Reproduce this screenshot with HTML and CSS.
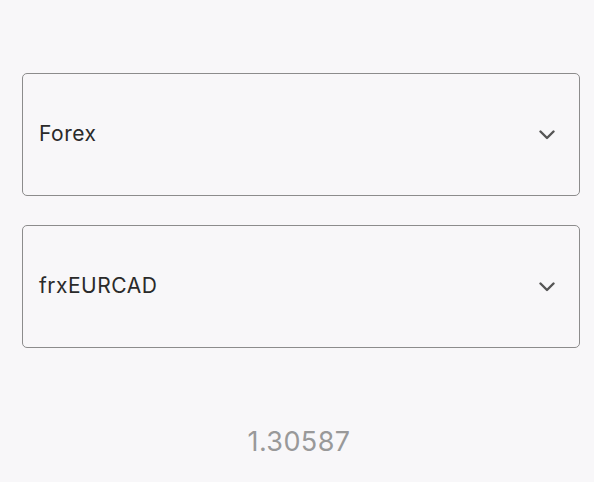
FILE: index.html
```html
<!DOCTYPE html>
<html>
<head>
<meta charset="utf-8">
<link rel="stylesheet" href="styles.css">
</head>
<body>
<main class="page">
  <div class="select">
    <span class="select-label">Forex</span>
    <svg class="chevron" width="16" height="10" viewBox="0 0 16 10"><path d="M1.5 1.5 L8 8 L14.5 1.5" fill="none" stroke="#555" stroke-width="2.4" stroke-linecap="round" stroke-linejoin="round"/></svg>
  </div>
  <div class="select">
    <span class="select-label">frxEURCAD</span>
    <svg class="chevron" width="16" height="10" viewBox="0 0 16 10"><path d="M1.5 1.5 L8 8 L14.5 1.5" fill="none" stroke="#555" stroke-width="2.4" stroke-linecap="round" stroke-linejoin="round"/></svg>
  </div>
  <div class="price">1.30587</div>
</main>
</body>
</html>
```
FILE: styles.css
```css
html, body {
  margin: 0;
  padding: 0;
  background: #f8f7f9;
  font-family: Inter, "Noto Sans", sans-serif;
}
.page {
  padding: 73px 14px 0 22px;
  display: flex;
  flex-direction: column;
  gap: 29px;
}
.select {
  box-sizing: border-box;
  height: 123px;
  border: 1px solid #8c8c8c;
  border-radius: 5px;
  display: flex;
  align-items: center;
  justify-content: space-between;
  padding: 0 24px 0 16px;
}
.select-label {
  font-size: 21px;
  letter-spacing: 0.5px;
  color: #2a2a2a;
  margin-top: -2px;
}
.chevron {
  display: block;
  margin-top: 1px;
}
.price {
  margin-top: 48px;
  text-align: center;
  font-size: 27px;
  letter-spacing: 0.4px;
  color: #999;
  padding-right: 4px;
}
```
